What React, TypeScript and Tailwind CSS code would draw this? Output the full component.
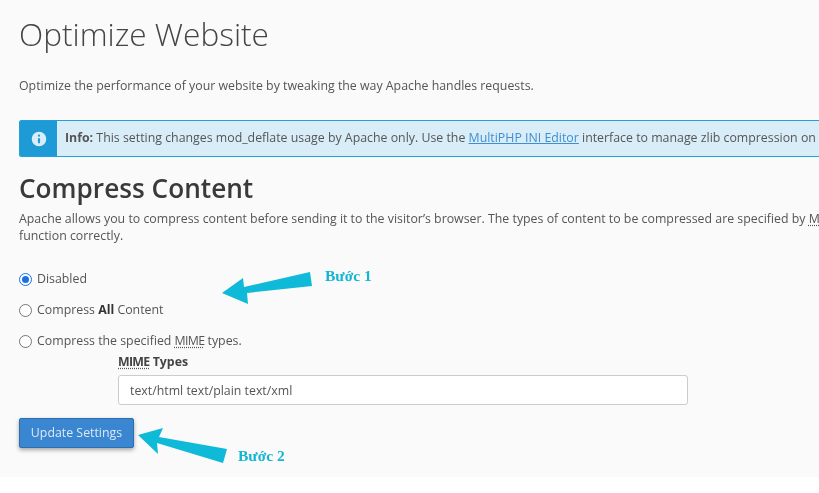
import { Info } from "lucide-react";

const abbrClass = "tracking-[-0.7px] underline decoration-dotted decoration-[#555] underline-offset-2";

function RadioRow({ checked, children }: { checked?: boolean; children: React.ReactNode }) {
  return (
    <label className="flex h-[20px] items-center gap-[5px] whitespace-nowrap">
      <span
        className={`flex h-[13px] w-[13px] items-center justify-center rounded-full border bg-white ${
          checked ? "border-[#1a73e8]" : "border-[#767676]"
        }`}
      >
        {checked ? <span className="h-[7px] w-[7px] rounded-full bg-[#1a6fe8]" /> : null}
      </span>
      <span>{children}</span>
    </label>
  );
}

function Arrow({ points }: { points: string }) {
  return (
    <svg viewBox="0 0 819 493" className="pointer-events-none absolute left-0 top-0 h-[493px] w-[819px]">
      <polygon points={points} fill="#0fb9d8" />
    </svg>
  );
}

export default function App() {
  return (
    <div className="relative h-[493px] w-[819px] overflow-hidden bg-white font-['Open_Sans',sans-serif] text-[12.35px] text-[#555] blur-[0.3px]">
      <div className="h-[477px] bg-[#fafafa] pl-[19px] pt-[14px]">
        <h1 className="whitespace-nowrap text-[31.6px] font-light leading-[40px] text-[#444]">Optimize Website</h1>
        <p className="mt-[23px] whitespace-nowrap leading-[18px]">
          Optimize the performance of your website by tweaking the way Apache handles requests.
        </p>

        <div className="mt-[25px] flex h-[37px] w-[900px] overflow-hidden rounded-l-[2px] border border-[#22a0da] bg-[#d9edf9]">
          <div className="flex w-[37px] shrink-0 items-center justify-center bg-[#1e9ad6]">
            <Info className="h-[20px] w-[20px] fill-[#d9edf9] text-[#1e9ad6]" strokeWidth={2.6} />
          </div>
          <p className="flex items-center whitespace-pre pl-[8px]">
            <strong className="font-bold">Info:</strong>
            {" This setting changes mod_deflate usage by Apache only. Use the "}
            <a className="text-[#3f8fd0] underline">MultiPHP INI Editor</a>
            {" interface to manage zlib compression on"}
          </p>
        </div>

        <h2 className="mt-[13px] whitespace-nowrap text-[26.2px] font-semibold leading-[36px] text-[#3a3a3a]">
          Compress Content
        </h2>
        <p className="mt-[5px] whitespace-nowrap leading-[16px]">
          Apache allows you to compress content before sending it to the visitor’s browser. The types of content to be
          compressed are specified by <span className={abbrClass}>MIME</span> types.
        </p>
        <p className="leading-[18px]">function correctly.</p>

        <div className="mt-[24px] flex flex-col gap-[11px]">
          <RadioRow checked>Disabled</RadioRow>
          <RadioRow>
            Compress <strong className="font-bold text-[#333]">All</strong> Content
          </RadioRow>
          <RadioRow>
            Compress the specified <span className={abbrClass}>MIME</span> types.
          </RadioRow>
        </div>

        <div className="ml-[99px] mt-[2px] w-[570px]">
          <div className="font-bold leading-[18px] text-[#444]">
            <span className={abbrClass}>MIME</span> Types
          </div>
          <input
            readOnly
            value="text/html text/plain text/xml"
            className="mt-[4px] h-[30px] w-full rounded-[3px] border border-[#ccc] bg-white px-[11px] text-[12.35px] text-[#555] outline-none"
          />
        </div>

        <button
          type="button"
          className="mt-[13px] h-[30px] w-[115px] rounded-[2px] border border-[#2c6fb0] bg-[#3a86d1] text-[12.35px] text-[#dbe9f6] shadow-[0_2px_4px_rgba(0,0,0,0.35)]"
        >
          Update Settings
        </button>
      </div>

      <Arrow points="222,293 243,278 244,287 310,272 312,286 247,293 248,304" />
      <Arrow points="138,435 163,428 159,437 227,449 223,463 157,443 158,454" />
      <span className="absolute left-[325px] top-[267px] font-['Liberation_Serif',serif] text-[15.5px] font-bold leading-[18px] text-[#12b5d3]">
        Bước 1
      </span>
      <span className="absolute left-[238px] top-[447px] font-['Liberation_Serif',serif] text-[15.5px] font-bold leading-[18px] text-[#12b5d3]">
        Bước 2
      </span>
    </div>
  );
}
